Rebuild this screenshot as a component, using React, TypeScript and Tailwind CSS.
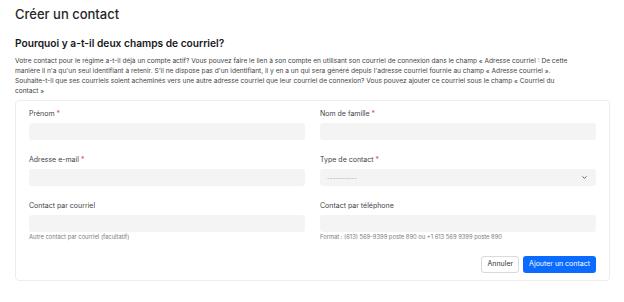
import { ChevronDown } from "lucide-react";

const LABEL = "block text-[7px] leading-[10px] text-[#3f3f46]";
const FIELD = "mt-1 h-[17px] w-full rounded-[3px] bg-[#f4f4f5]";
const HELP = "mt-px text-[5.8px] leading-[8px] text-[#7a7a80]";

function Req() {
  return <span className="text-[#e5484d]"> *</span>;
}

function Field({ label, required, help, select }: { label: string; required?: boolean; help?: string; select?: boolean }) {
  return (
    <div>
      <label className={LABEL}>
        {label}
        {required && <Req />}
      </label>
      {select ? (
        <div className={`${FIELD} flex items-center justify-between pl-[7px] pr-[8px]`}>
          <span className="text-[6px] leading-none tracking-[0.2px] text-[#a1a1aa]">----------</span>
          <ChevronDown className="h-[7px] w-[7px] text-[#555]" strokeWidth={3} />
        </div>
      ) : (
        <div className={FIELD} />
      )}
      {help && <p className={HELP}>{help}</p>}
    </div>
  );
}

export default function App() {
  return (
    <div className="h-[302px] w-[624px] bg-white px-[15px] pt-1 font-['Inter',sans-serif] text-[#222]">
      <h1 className="text-[13px] leading-5 font-medium text-[#27272a]">Créer un contact</h1>

      <h2 className="mt-3 text-[10.2px] leading-[14px] font-semibold text-[#18181b]">
        Pourquoi y a-t-il deux champs de courriel?
      </h2>

      <p className="mt-1.5 text-[6.6px] leading-[10px] text-[#3f3f46] whitespace-nowrap">
        Votre contact pour le régime a-t-il déjà un compte actif? Vous pouvez faire le lien à son compte en utilisant son courriel de connexion dans le champ « Adresse courriel : De cette
        <br />
        manière il n'a qu'un seul identifiant à retenir. S'il ne dispose pas d'un identifiant, il y en a un qui sera généré depuis l'adresse courriel fournie au champ « Adresse courriel ».
        <br />
        Souhaite-t-il que ses courriels soient acheminés vers une autre adresse courriel que leur courriel de connexion? Vous pouvez ajouter ce courriel sous le champ « Courriel du
        <br />
        contact »
      </p>

      {/* form card */}
      <form className="mt-1 w-[595px] rounded-[4px] border border-[#ededed] px-[13px] pt-2 pb-[7px]">
        <div className="grid grid-cols-2 gap-x-[15px] gap-y-[15px]">
          <Field label="Prénom" required />
          <Field label="Nom de famille" required />
          <Field label="Adresse e-mail" required />
          <Field label="Type de contact" required select />
          <Field label="Contact par courriel" help="Autre contact par courriel (facultatif)" />
          <Field label="Contact par téléphone" help="Format : (613) 569-9399 poste 890 ou +1 613 569 9399 poste 890" />
        </div>

        <div className="mt-[15px] flex justify-end gap-[4px]">
          <button type="button" className="h-[17px] rounded-[3px] border border-[#d9d9de] bg-white px-[5px] text-[7px] text-[#333]">
            Annuler
          </button>
          <button type="button" className="h-[17px] rounded-[3px] bg-[#0b6bff] px-[6px] text-[7px] text-white">
            Ajouter un contact
          </button>
        </div>
      </form>
    </div>
  );
}
